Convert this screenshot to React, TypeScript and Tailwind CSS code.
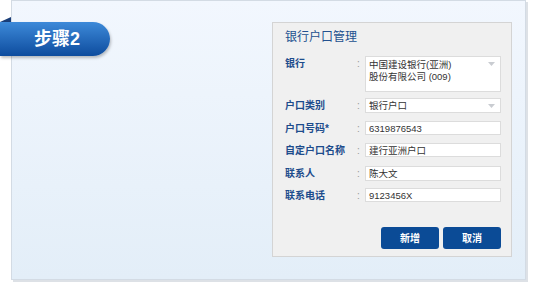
import React from "react";

const font = { fontFamily: '"Liberation Sans", "Noto Sans CJK SC", sans-serif' };

function Arrow() {
	return (
		<svg width="7" height="4" viewBox="0 0 7 4" className="absolute right-[5px] top-[5px]">
			<polygon points="0,0 7,0 3.5,4" fill="#c9ccd1" />
		</svg>
	);
}

interface RowProps {
	label: string;
	mt: string;
	children: React.ReactNode;
	boxClass?: string;
}

function Row({ label, mt, children, boxClass = "h-[14px]" }: RowProps) {
	return (
		<div className={`flex items-start ${mt}`}>
			<div className="w-[72px] pt-[2px] text-[10px] leading-[11px] font-bold text-[#1d4c8c]">{label}</div>
			<div className="w-[8px] pt-[2px] text-[10px] leading-[11px] text-[#999]">:</div>
			<div
				className={`relative w-[136px] ${boxClass} bg-white border border-[#dcdcdc] px-[3px] text-[9.5px] leading-[12px] text-[#333]`}>
				{children}
			</div>
		</div>
	);
}

export default function App() {
	return (
		<div className="relative w-[534px] h-[283px] bg-white" style={font}>
			<div className="ml-[11px] w-[515px] h-[280px] border border-[#d3dbe4] bg-gradient-to-b from-[#f2f7fe] to-[#e3eef8] shadow-[2px_2px_0_#dde1e6] flex justify-end pt-[21px] pr-[13px]">
				<div className="w-[240px] h-[235px] border border-[#d4d4d4] bg-[#f0f0f0] pl-[12px] pt-[6px]">
					<div className="text-[12px] leading-[16px] text-[#22508f]">银行户口管理</div>

					<Row label="银行" mt="mt-[11px]" boxClass="h-[36px] pt-[2px]">
						<div>中国建设银行(亚洲)</div>
						<div>股份有限公司 (009)</div>
						<Arrow />
					</Row>
					<Row label="户口类别" mt="mt-[6px]" boxClass="h-[15px] pt-[1px]">
						银行户口
						<Arrow />
					</Row>
					<Row label="户口号码*" mt="mt-[8px]" boxClass="h-[14px] pt-[1px]">
						6319876543
					</Row>
					<Row label="自定户口名称" mt="mt-[8px]" boxClass="h-[14px] pt-[1px]">
						建行亚洲户口
					</Row>
					<Row label="联系人" mt="mt-[9px]" boxClass="h-[15px] pt-[1px]">
						陈大文
					</Row>
					<Row label="联系电话" mt="mt-[7px]" boxClass="h-[14px] pt-[1px]">
						9123456X
					</Row>

					<div className="flex justify-end gap-[4px] pr-[10px] mt-[25px]">
						<button className="w-[58px] h-[22px] rounded-[3px] bg-[#0b4b96] text-white text-[10px] font-bold">新增</button>
						<button className="w-[58px] h-[22px] rounded-[3px] bg-[#0b4b96] text-white text-[10px] font-bold">取消</button>
					</div>
				</div>
			</div>

			{/* step ribbon */}
			<svg width="11" height="5" viewBox="0 0 11 5" className="absolute left-0 top-[17px]">
				<polygon points="0,5 11,0 11,5" fill="#1a3e78" />
			</svg>
			<div className="absolute left-0 top-[22px] w-[110px] h-[34px] rounded-r-[17px] bg-gradient-to-b from-[#3d8ad9] to-[#0d4c9e] shadow-[1px_2px_3px_rgba(0,0,0,0.25)] flex items-center pl-[34px]">
				<span className="text-white text-[18px] font-bold leading-none">步骤2</span>
			</div>
		</div>
	);
}
